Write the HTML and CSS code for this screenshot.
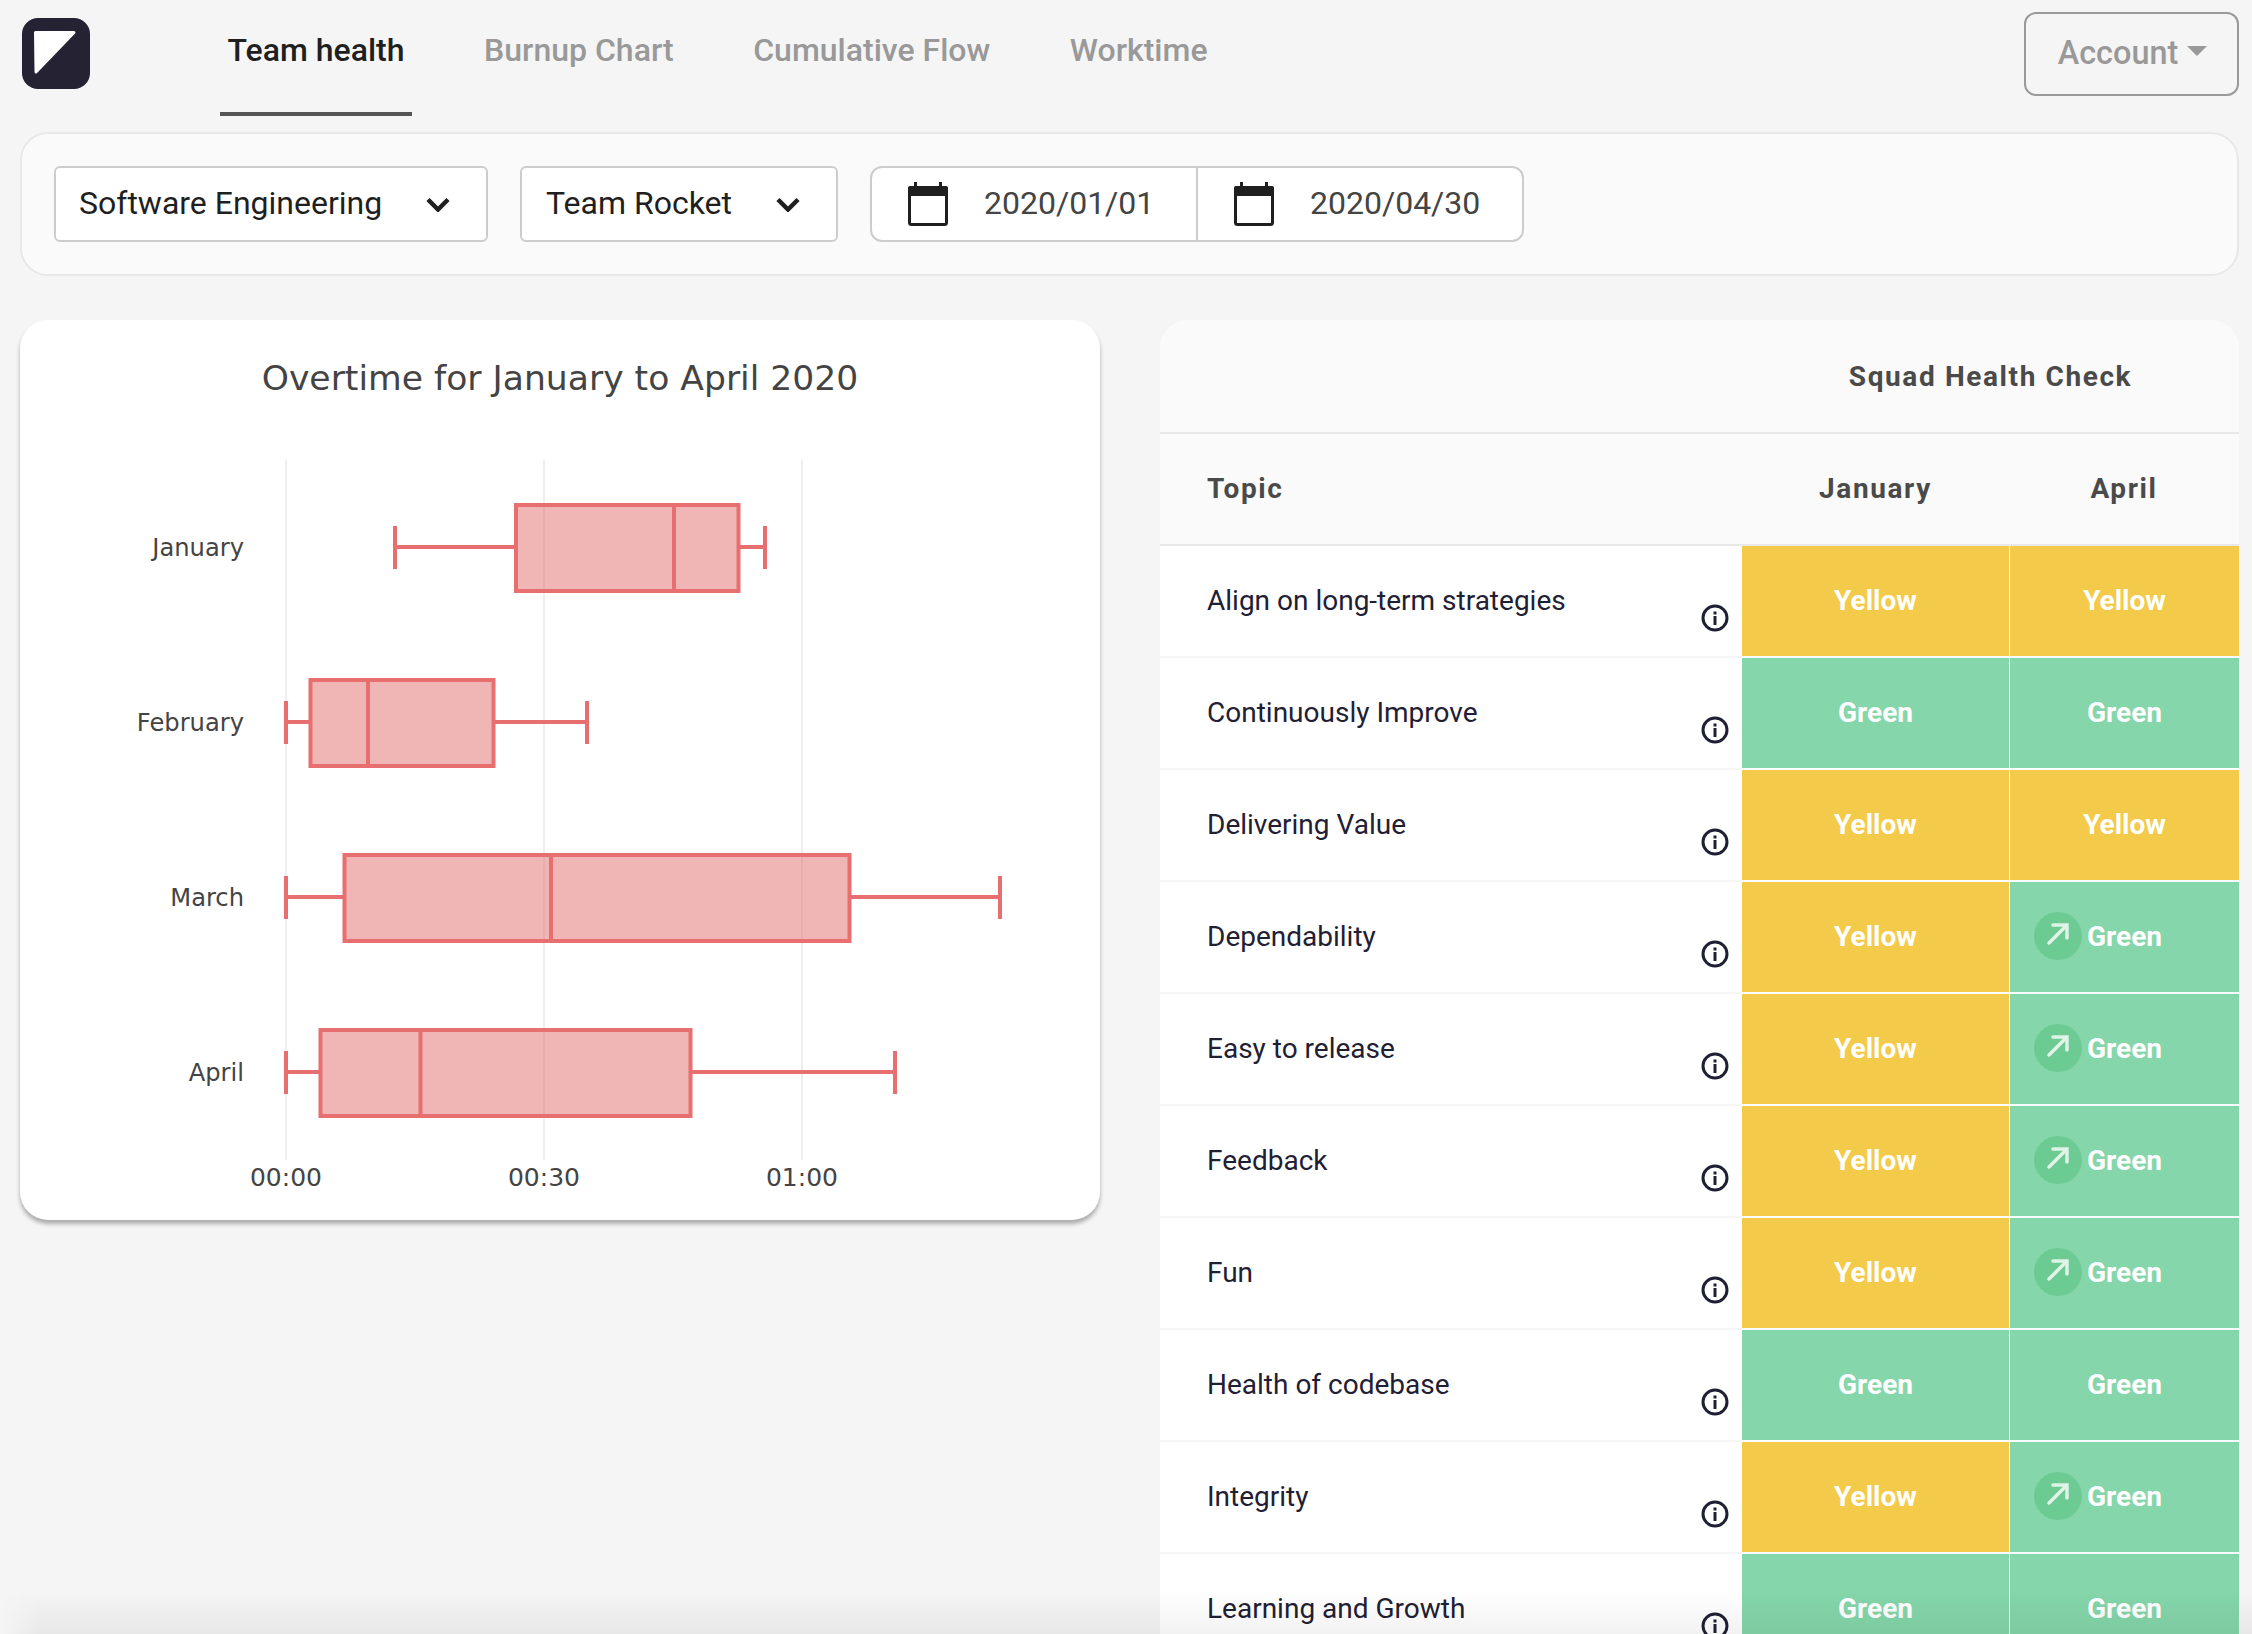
FILE: index.html
```html
<!DOCTYPE html>
<html lang="en">
<head>
<meta charset="utf-8">
<title>Team health</title>
<link rel="stylesheet" href="styles.css">
</head>
<body>
<div class="page">
  <header class="topbar">
    <svg class="logo" width="68" height="71" viewBox="0 0 68 71"><rect width="68" height="71" rx="16" fill="#252233"/><path d="M13.5 14.5H52L14 54Z" fill="#fff" stroke="#fff" stroke-width="3" stroke-linejoin="round"/></svg>
    <nav class="tabs">
      <a class="tab active">Team health</a>
      <a class="tab">Burnup Chart</a>
      <a class="tab">Cumulative Flow</a>
      <a class="tab">Worktime</a>
    </nav>
    <button class="account"><span class="account-label">Account</span><span class="caret"></span></button>
  </header>

  <section class="filters">
    <div class="select select-dept"><span class="field-text">Software Engineering</span>
      <svg class="chev" width="24" height="15" viewBox="0 0 24 15"><path d="M2 2.5L12 12.5L22 2.5" fill="none" stroke="#1f1f1f" stroke-width="4.5"/></svg>
    </div>
    <div class="select select-team"><span class="field-text">Team Rocket</span>
      <svg class="chev" width="24" height="15" viewBox="0 0 24 15"><path d="M2 2.5L12 12.5L22 2.5" fill="none" stroke="#1f1f1f" stroke-width="4.5"/></svg>
    </div>
    <div class="range">
      <div class="date">
        <svg class="cal" width="40" height="44" viewBox="0 0 40 44"><path d="M6 0h3v4h-3zM31 0h3v4h-3z" fill="#1f1f1f"/><rect x="1.5" y="5.5" width="37" height="37" rx="2" fill="none" stroke="#1f1f1f" stroke-width="3"/><rect x="0" y="4" width="40" height="10" rx="2" fill="#1f1f1f"/></svg>
        <span class="field-text">2020/01/01</span>
      </div>
      <div class="date date-end">
        <svg class="cal" width="40" height="44" viewBox="0 0 40 44"><path d="M6 0h3v4h-3zM31 0h3v4h-3z" fill="#1f1f1f"/><rect x="1.5" y="5.5" width="37" height="37" rx="2" fill="none" stroke="#1f1f1f" stroke-width="3"/><rect x="0" y="4" width="40" height="10" rx="2" fill="#1f1f1f"/></svg>
        <span class="field-text">2020/04/30</span>
      </div>
    </div>
  </section>

  <main class="content">
    <section class="chart-card">
      <svg class="chart" width="1080" height="900" viewBox="20 320 1080 900">
        <g class="grid">
          <line x1="286" y1="460" x2="286" y2="1160"/>
          <line x1="544" y1="460" x2="544" y2="1160"/>
          <line x1="802" y1="460" x2="802" y2="1160"/>
        </g>
        <text class="chart-title" x="560" y="390" text-anchor="middle">Overtime for January to April 2020</text>
        <g class="ylabels" text-anchor="end">
          <text x="244" y="556">January</text>
          <text x="244" y="731">February</text>
          <text x="244" y="906">March</text>
          <text x="244" y="1081">April</text>
        </g>
        <g class="xlabels" text-anchor="middle">
          <text x="286" y="1186">00:00</text>
          <text x="544" y="1186">00:30</text>
          <text x="802" y="1186">01:00</text>
        </g>
        <g class="box">
          <path class="whisk" d="M395 547H516M739 547H765M395 526V569M765 526V569"/>
          <rect x="516" y="505" width="222.5" height="86"/>
          <path class="whisk" d="M674 505V591"/>
        </g>
        <g class="box">
          <path class="whisk" d="M286 722H311M494 722H587M286 701V744M587 701V744"/>
          <rect x="310.5" y="680" width="183" height="86"/>
          <path class="whisk" d="M368 680V766"/>
        </g>
        <g class="box">
          <path class="whisk" d="M286 897H345M850 897H1000M286 876V919M1000 876V919"/>
          <rect x="344.5" y="855" width="505" height="86"/>
          <path class="whisk" d="M551 855V941"/>
        </g>
        <g class="box">
          <path class="whisk" d="M286 1072H321M691 1072H895M286 1051V1094M895 1051V1094"/>
          <rect x="320.5" y="1030" width="370" height="86"/>
          <path class="whisk" d="M420.5 1030V1116"/>
        </g>
      </svg>
    </section>

    <section class="health-card">
      <table class="health">
        <colgroup><col class="col-topic"><col class="col-jan"><col class="col-apr"></colgroup>
        <thead>
          <tr class="head-top"><th></th><th colspan="2">Squad Health Check</th></tr>
          <tr class="head-sub"><th class="th-topic">Topic</th><th>January</th><th>April</th></tr>
        </thead>
        <tbody>
          <tr><td class="topic"><div class="topic-in"><span class="topic-name">Align on long-term strategies</span><svg class="info"><use href="#i"/></svg></div></td><td class="y">Yellow</td><td class="y">Yellow</td></tr>
          <tr><td class="topic"><div class="topic-in"><span class="topic-name">Continuously Improve</span><svg class="info"><use href="#i"/></svg></div></td><td class="g">Green</td><td class="g">Green</td></tr>
          <tr><td class="topic"><div class="topic-in"><span class="topic-name">Delivering Value</span><svg class="info"><use href="#i"/></svg></div></td><td class="y">Yellow</td><td class="y">Yellow</td></tr>
          <tr><td class="topic"><div class="topic-in"><span class="topic-name">Dependability</span><svg class="info"><use href="#i"/></svg></div></td><td class="y">Yellow</td><td class="g"><div class="trend"><svg class="up"><use href="#u"/></svg><span class="trend-label">Green</span></div></td></tr>
          <tr><td class="topic"><div class="topic-in"><span class="topic-name">Easy to release</span><svg class="info"><use href="#i"/></svg></div></td><td class="y">Yellow</td><td class="g"><div class="trend"><svg class="up"><use href="#u"/></svg><span class="trend-label">Green</span></div></td></tr>
          <tr><td class="topic"><div class="topic-in"><span class="topic-name">Feedback</span><svg class="info"><use href="#i"/></svg></div></td><td class="y">Yellow</td><td class="g"><div class="trend"><svg class="up"><use href="#u"/></svg><span class="trend-label">Green</span></div></td></tr>
          <tr><td class="topic"><div class="topic-in"><span class="topic-name">Fun</span><svg class="info"><use href="#i"/></svg></div></td><td class="y">Yellow</td><td class="g"><div class="trend"><svg class="up"><use href="#u"/></svg><span class="trend-label">Green</span></div></td></tr>
          <tr><td class="topic"><div class="topic-in"><span class="topic-name">Health of codebase</span><svg class="info"><use href="#i"/></svg></div></td><td class="g">Green</td><td class="g">Green</td></tr>
          <tr><td class="topic"><div class="topic-in"><span class="topic-name">Integrity</span><svg class="info"><use href="#i"/></svg></div></td><td class="y">Yellow</td><td class="g"><div class="trend"><svg class="up"><use href="#u"/></svg><span class="trend-label">Green</span></div></td></tr>
          <tr><td class="topic"><div class="topic-in"><span class="topic-name">Learning and Growth</span><svg class="info"><use href="#i"/></svg></div></td><td class="g">Green</td><td class="g">Green</td></tr>
        </tbody>
      </table>
    </section>
  </main>
  <div class="fade"></div>
</div>
<svg class="defs" width="0" height="0">
  <symbol id="i" viewBox="0 0 28 28"><circle cx="14" cy="14" r="12" fill="none" stroke="#1f2033" stroke-width="3"/><rect x="12.5" y="12" width="3" height="9" fill="#1f2033"/><rect x="12.5" y="7.5" width="3" height="3" fill="#1f2033"/></symbol>
  <symbol id="u" viewBox="0 0 48 48"><circle cx="24" cy="24" r="24" fill="#6ccb93"/><path d="M15 31L33 13M19 13H33V26" fill="none" stroke="#fff" stroke-opacity=".78" stroke-width="3.5" stroke-linecap="round"/></symbol>
</svg>
</body>
</html>
```

FILE: styles.css
```css
* { box-sizing: border-box; }
html, body { margin: 0; height: 1634px; overflow: hidden; background: #f5f5f5; }
body { font-family: Roboto, "Liberation Sans", sans-serif; font-size: 28px; color: #1f2033; }
.page { position: relative; height: 1634px; padding: 0 13px 0 20px; overflow: hidden; }

.topbar { display: flex; align-items: flex-start; height: 116px; }
.logo { margin: 18px 0 0 2px; flex: none; }
.tabs { display: flex; gap: 64.6px; margin-left: 130px; }
.tab { display: block; height: 116px; padding: 30px 7.5px 0; line-height: 40px; font-size: 32px; font-weight: 500; color: #999; }
.tab.active { color: #1f1f1f; border-bottom: 4px solid #555; }
.account { margin: 12px 0 0 auto; width: 215px; height: 84px; padding: 0 0 3px 2px; border: 2px solid #999; border-radius: 12px; background: transparent; color: #999; font: 500 32.4px Roboto, sans-serif; display: flex; align-items: center; justify-content: center; gap: 9px; }
.caret { width: 0; height: 0; border-left: 10px solid transparent; border-right: 10px solid transparent; border-top: 10px solid #999; margin-bottom: 4px; }

.filters { margin-top: 16px; height: 144px; padding: 32px; display: flex; gap: 32px; background: #fafafa; border: 2px solid #e8e8e8; border-radius: 28px; }
.select, .range { height: 76px; background: #fff; border: 2px solid #ccc; border-radius: 6px; }
.select { display: flex; align-items: center; justify-content: space-between; font-size: 32px; color: #1f1f1f; }
.field-text { padding-bottom: 3px; }
.select-dept { width: 434px; padding: 0 36px 0 23px; }
.select-team { width: 318px; padding: 0 36px 0 24px; }
.range { display: flex; width: 654px; border-radius: 12px; color: #444; font-size: 32px; }
.date { display: flex; align-items: center; width: 324px; padding-left: 36px; gap: 36px; flex: none; }
.date-end { width: auto; flex: 1; padding-left: 36px; border-left: 2px solid #ccc; }
.cal { flex: none; }

.content { display: grid; grid-template-columns: 1080px 1079px; gap: 60px; margin-top: 44px; align-items: start; }
.chart-card { height: 900px; background: #fff; border-radius: 28px; box-shadow: 0 4px 4px rgba(0,0,0,.3); }
.chart { display: block; }
.chart text { font-family: "DejaVu Sans", sans-serif; fill: #444; }
.grid line { stroke: #e9e9e9; stroke-width: 1.5; }
.chart .chart-title { font-size: 34.6px; }
.ylabels text { font-size: 24.2px; }
.xlabels text { font-size: 25px; }
.box rect { fill: rgba(225,110,110,.5); stroke: #e76f6f; stroke-width: 4; }
.whisk { fill: none; stroke: #e76f6f; stroke-width: 4; }

.health-card { background: #fafafa; border-radius: 28px 28px 0 0; overflow: hidden; }
.health { width: 1079px; table-layout: fixed; border-collapse: separate; border-spacing: 0; }
.col-topic { width: 582px; }
.col-jan { width: 267px; }
.col-apr { width: 230px; }
.health th { padding: 0; font-weight: 700; color: #4a4a4a; letter-spacing: 1.6px; text-align: center; }
.head-top th { height: 114px; border-bottom: 2px solid #e8e8e8; }
.head-sub th { height: 112px; padding-bottom: 1px; border-bottom: 2px solid #e8e8e8; }
.health .th-topic { text-align: left; padding-left: 47px; }
.health td { height: 112px; padding: 0; border-bottom: 2px solid #f5f5f5; background: #fff; }
.topic-in { display: flex; align-items: center; justify-content: space-between; height: 110px; padding: 0 13px 0 47px; }
.topic-name { padding-bottom: 2px; }
.info { width: 28px; height: 28px; margin-top: 34px; flex: none; }
.health .y, .health .g { padding-bottom: 2px; text-align: center; color: #fff; font-weight: 700; border-bottom-color: #fff; }
.health .y { background: #f4ca4a; }
.health .g { background: #85d6aa; }
.health td + td + td { border-left: 1px solid #fff; }
.trend { display: flex; align-items: center; justify-content: center; gap: 5px; }
.up { width: 48px; height: 48px; flex: none; margin-left: -53px; }

.fade { position: absolute; left: 0; right: 0; bottom: 0; height: 44px; background: linear-gradient(rgba(0,0,0,0), rgba(0,0,0,.05)); -webkit-mask-image: linear-gradient(90deg, transparent, #000 40px); mask-image: linear-gradient(90deg, transparent, #000 40px); pointer-events: none; }
.defs { position: absolute; }
```
